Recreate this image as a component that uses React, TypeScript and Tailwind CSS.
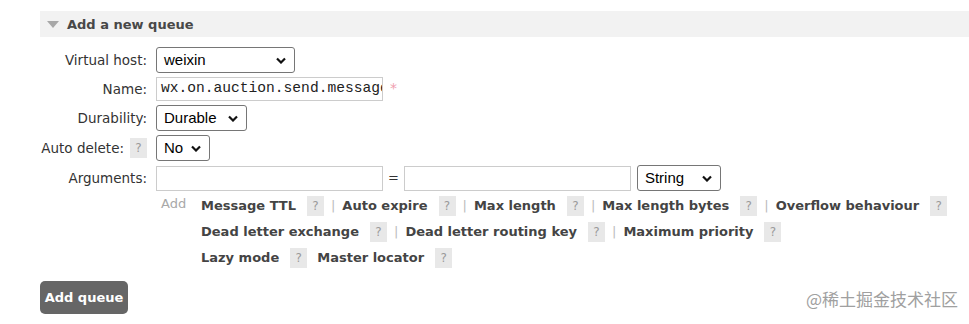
import { ReactNode } from 'react'

const verdana = "font-['DejaVu_Sans',Verdana,sans-serif]"
const arial = "font-['Liberation_Sans',Arial,sans-serif]"

function Chevron() {
  return (
    <svg width="10" height="7" viewBox="0 0 10 7" className="shrink-0">
      <polyline points="1,1.5 5,5.5 9,1.5" fill="none" stroke="#111" strokeWidth="2.2" />
    </svg>
  )
}

function FakeSelect({ value, width, height = 'h-[26px]' }: { value: string; width: string; height?: string }) {
  return (
    <div
      className={`${width} ${height} ${arial} flex items-center justify-between border border-[#767676] rounded-[3px] bg-white pl-[7px] pr-[8px] text-[15px] text-black`}
    >
      <span>{value}</span>
      <Chevron />
    </div>
  )
}

function Help() {
  return (
    <span className="inline-flex h-[20px] w-[17px] items-center justify-center bg-[#e8e8e8] text-[12px] text-[#9a9a9a]">
      ?
    </span>
  )
}

function Row({ label, children }: { label: ReactNode; children: ReactNode }) {
  return (
    <div className="flex items-center">
      <div className="w-[107px] flex justify-end items-center gap-[6px] text-[13.5px] text-[#333]">{label}</div>
      <div className="ml-[9px] flex items-center">{children}</div>
    </div>
  )
}

function Arg({ name, sep = true }: { name: string; sep?: boolean }) {
  return (
    <span className="inline-flex items-center">
      <span className="font-bold text-[#444]">{name}</span>
      <span className="ml-[11px]"><Help /></span>
      {sep && <span className="mx-[7px] text-[#bbb] font-normal">|</span>}
      {!sep && <span className="mr-[10px]" />}
    </span>
  )
}

export default function App() {
  return (
    <div className={`relative w-[969px] h-[324px] bg-white overflow-hidden ${verdana}`}>
      <div className="pl-[40px] pt-[11px]">
        <div className="h-[26px] bg-[#f2f2f2] flex items-center pl-[7px] pt-[2px]">
          <svg width="12" height="8" viewBox="0 0 12 8">
            <polygon points="0,0 12,0 6,7" fill="#a8a8a8" />
          </svg>
          <span className="ml-[8px] font-bold text-[13px] text-[#484848]">Add a new queue</span>
        </div>

        <div className="mt-[10px] flex flex-col gap-[4px]">
          <Row label="Virtual host:">
            <FakeSelect value="weixin" width="w-[139px]" />
          </Row>
          <Row label="Name:">
            <div className="w-[227px] h-[24px] border border-[#cccccc] bg-white flex items-center pl-[4px] overflow-hidden whitespace-nowrap font-['Liberation_Mono','Courier_New',monospace] text-[14.6px] text-[#222]">
              wx.on.auction.send.message
            </div>
            <span className="ml-[7px] text-[#f0a0b0] text-[14px] self-start mt-[1px]">*</span>
          </Row>
          <Row label="Durability:">
            <FakeSelect value="Durable" width="w-[91px]" />
          </Row>
          <Row
            label={
              <>
                <span>Auto delete:</span>
                <Help />
              </>
            }
          >
            <FakeSelect value="No" width="w-[54px]" />
          </Row>
          <Row label="Arguments:">
            <div className="w-[227px] h-[25px] border border-[#cccccc] bg-white" />
            <span className="mx-[5px] text-[13px] text-[#333]">=</span>
            <div className="w-[227px] h-[25px] border border-[#cccccc] bg-white" />
            <div className="ml-[6px]">
              <FakeSelect value="String" width="w-[84px]" />
            </div>
          </Row>
        </div>

        <div className="flex mt-[2px] ml-[121px] text-[13px]">
          <span className="w-[40px] text-[#a8a8a8] leading-[22px]">Add</span>
          <div className="flex flex-col gap-[6px] mt-[3px]">
            <div className="flex items-center">
              <Arg name="Message TTL" />
              <Arg name="Auto expire" />
              <Arg name="Max length" />
              <Arg name="Max length bytes" />
              <Arg name="Overflow behaviour" sep={false} />
            </div>
            <div className="flex items-center">
              <Arg name="Dead letter exchange" />
              <Arg name="Dead letter routing key" />
              <Arg name="Maximum priority" sep={false} />
            </div>
            <div className="flex items-center">
              <Arg name="Lazy mode" sep={false} />
              <Arg name="Master locator" sep={false} />
            </div>
          </div>
        </div>

        <button className="mt-[13px] h-[33px] w-[88px] rounded-[5px] bg-[#666666] text-white font-bold text-[13px]">
          Add queue
        </button>
      </div>

      <div className="absolute right-[11px] bottom-[13px] text-[17px] text-[#a0a0a0] font-['Noto_Sans_CJK_SC',sans-serif]">
        @稀土掘金技术社区
      </div>
    </div>
  )
}
